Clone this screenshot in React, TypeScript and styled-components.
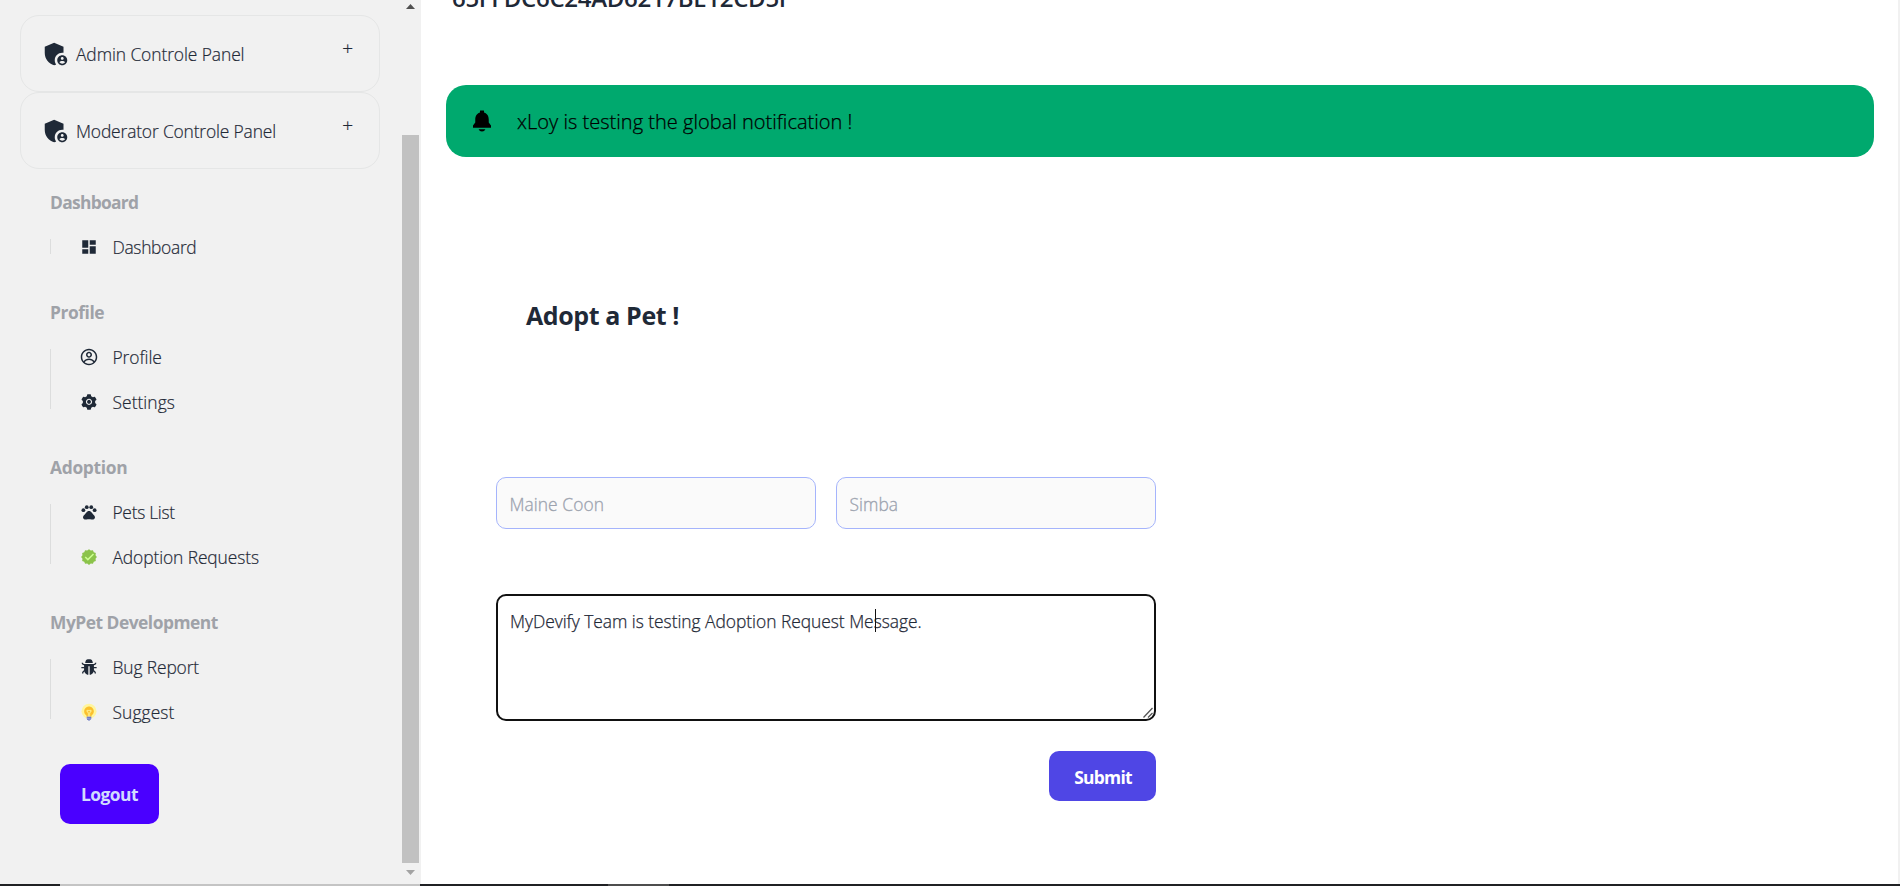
import React from "react";
import styled, { createGlobalStyle } from "styled-components";
import { MdAdminPanelSettings, MdDashboard, MdPets } from "react-icons/md";
import { CgProfile } from "react-icons/cg";
import { AiFillSetting, AiFillBug } from "react-icons/ai";
import { FcApproval, FcIdea } from "react-icons/fc";
import { IoNotificationsSharp } from "react-icons/io5";

const Global = createGlobalStyle`
  * { box-sizing: border-box; }
  body {
    margin: 0;
    background: #fff;
    color: #1f2937;
    font-family: "Open Sans", "Noto Sans", sans-serif;
    overflow: hidden;
  }
`;

const Page = styled.div`
  display: flex;
  flex-direction: column;
  height: 886px;
  overflow: hidden;
`;

const Columns = styled.div`
  display: flex;
  height: 884px;
`;

const Sidebar = styled.aside`
  display: flex;
  width: 421px;
  padding-right: 2px;
  background: #f1f1f1;
`;

const SidebarContent = styled.div`
  width: 402px;
  padding: 15px 22px 0 20px;
`;

const ScrollTrack = styled.div`
  width: 17px;
  height: 884px;
  display: flex;
  flex-direction: column;
  align-items: center;
`;

const Arrow = styled.div<{ $down?: boolean }>`
  width: 9px;
  height: 5px;
  margin-top: ${(p) => (p.$down ? "7px" : "4px")};
  background: ${(p) => (p.$down ? "#a3a3a3" : "#505050")};
  clip-path: ${(p) =>
    p.$down ? "polygon(0 0, 100% 0, 50% 100%)" : "polygon(0 100%, 100% 100%, 50% 0)"};
`;

const Thumb = styled.div`
  width: 17px;
  height: 728px;
  margin-top: 126px;
  background: #c1c1c1;
`;

const Panel = styled.div`
  display: flex;
  width: 360px;
  height: 77px;
  padding: 0 26px 0 20px;
  align-items: center;
  border: 1px solid #e5e6e6;
  border-radius: 19px;
  font-size: 17.4px;
  font-weight: 300;
`;

const PanelLabel = styled.span<{ $spacing: string }>`
  flex: 1;
  margin-left: 5px;
  letter-spacing: ${(p) => p.$spacing};
  -webkit-text-stroke: 0.2px;
`;

const Plus = styled.span`
  align-self: flex-start;
  margin-top: 20px;
  font-size: 19px;
  line-height: 24px;
  -webkit-text-stroke: 0.2px;
`;

const Groups = styled.nav`
  display: flex;
  flex-direction: column;
  gap: 48px;
  padding: 23px 0 0 30px;
`;

const GroupTitle = styled.div<{ $spacing: string }>`
  height: 24px;
  font-size: 17.4px;
  font-weight: 700;
  line-height: 21px;
  color: #9fa2a8;
  letter-spacing: ${(p) => p.$spacing};
`;

const GroupItems = styled.div`
  display: flex;
  flex-direction: column;
  gap: 30px;
  margin-top: 23px;
  padding-left: 28.5px;
  border-left: 1px solid #dcdddd;
`;

const Item = styled.div<{ $spacing: string }>`
  display: flex;
  align-items: center;
  height: 15px;
  font-size: 17.4px;
  font-weight: 300;
  white-space: nowrap;
  letter-spacing: ${(p) => p.$spacing};
  svg { margin-right: 15px; flex: none; }
  span { -webkit-text-stroke: 0.2px; }
`;

const Logout = styled.button`
  display: block;
  width: 99px;
  height: 60px;
  margin: 45px 0 0 40px;
  padding: 0;
  border: 0;
  border-radius: 10px;
  background: #4a00ff;
  color: #d1dbff;
  font: 700 17.4px "Open Sans", sans-serif;
  letter-spacing: -0.5px;
`;

const Main = styled.main`
  flex: 1;
  display: flex;
  flex-direction: column;
  padding: 0 24px 0 25px;
  border-right: 2px solid #f1f1f1;
`;

const Code = styled.div`
  height: 12px;
  margin-left: 6px;
  display: flex;
  align-items: flex-end;
  overflow: hidden;
  font-size: 24px;
  font-weight: 600;
  line-height: 28px;
  letter-spacing: -0.3px;
`;

const Notice = styled.div`
  display: flex;
  align-items: center;
  height: 72px;
  margin-top: 73px;
  padding-left: 24px;
  border-radius: 20px;
  background: #00a96e;
  color: #000;
  font-size: 20px;
  font-weight: 300;
  span {
    margin-left: 23px;
    letter-spacing: 0.02px;
    -webkit-text-stroke: 0.25px;
  }
`;

const Title = styled.h1`
  margin: 139px 0 0 80px;
  font-size: 25px;
  line-height: 38px;
  font-weight: 700;
  letter-spacing: -0.4px;
`;

const Form = styled.form`
  display: flex;
  flex-direction: column;
  width: 660px;
  margin: 143px 0 0 50px;
`;

const Fields = styled.div`
  display: flex;
  gap: 20px;
`;

const Field = styled.input`
  flex: 1;
  min-width: 0;
  height: 52px;
  padding: 2px 12.5px 0;
  border: 1px solid #a5b4fc;
  border-radius: 10px;
  background: #fafafa;
  font: 300 17.4px "Open Sans", sans-serif;
  letter-spacing: 0.05px;
  &::placeholder {
    color: #9ca3af;
    opacity: 1;
    -webkit-text-stroke: 0.3px;
  }
`;

const MessageBox = styled.div`
  display: flex;
  position: relative;
  margin-top: 65px;
`;

const Message = styled.textarea`
  width: 660px;
  height: 127px;
  padding: 13px 12px;
  border: 2px solid #111;
  border-radius: 10px;
  outline: none;
  resize: none;
  color: #1f2937;
  font: 300 17.4px/24px "Open Sans", sans-serif;
  letter-spacing: -0.03px;
  -webkit-text-stroke: 0.25px;
`;

const Grip = styled.svg`
  position: absolute;
  right: 2px;
  bottom: 2px;
  width: 12px;
  height: 12px;
`;

const Caret = styled.i`
  position: absolute;
  left: 379px;
  top: 15px;
  width: 1px;
  height: 23px;
  background: #111;
`;

const Submit = styled.button`
  align-self: flex-end;
  width: 107px;
  height: 50px;
  margin-top: 30px;
  padding: 2px 0 0 1px;
  border: 0;
  border-radius: 10px;
  background: #4f46e5;
  color: #fff;
  font: 700 17.4px "Open Sans", sans-serif;
  letter-spacing: -0.7px;
`;

const BottomEdge = styled.div`
  display: flex;
  height: 2px;
  background: #202124;
`;

const EdgePart = styled.div<{ $gap: number; $width: number; $color: string }>`
  width: ${(p) => p.$width}px;
  margin-left: ${(p) => p.$gap}px;
  background: ${(p) => p.$color};
`;

const panels = [
  { label: "Admin Controle Panel", spacing: "-0.08px" },
  { label: "Moderator Controle Panel", spacing: "-0.15px" },
];

const groups = [
  { title: "Dashboard", spacing: "-0.7px", items: [{ label: "Dashboard", icon: MdDashboard, spacing: "-0.32px" }] },
  {
    title: "Profile",
    spacing: "-0.45px",
    items: [
      { label: "Profile", icon: CgProfile, spacing: "-0.08px" },
      { label: "Settings", icon: AiFillSetting, spacing: "0.05px" },
    ],
  },
  {
    title: "Adoption",
    spacing: "-0.3px",
    items: [
      { label: "Pets List", icon: MdPets, spacing: "-0.3px" },
      { label: "Adoption Requests", icon: FcApproval, spacing: "-0.1px" },
    ],
  },
  {
    title: "MyPet Development",
    spacing: "-0.5px",
    items: [
      { label: "Bug Report", icon: AiFillBug, spacing: "-0.12px" },
      { label: "Suggest", icon: FcIdea, spacing: "0.08px" },
    ],
  },
];

export default function App() {
  return (
    <Page>
      <Global />
      <Columns>
        <Sidebar>
          <SidebarContent>
            {panels.map((p) => (
              <Panel key={p.label}>
                <MdAdminPanelSettings size={30} />
                <PanelLabel $spacing={p.spacing}>{p.label}</PanelLabel>
                <Plus>+</Plus>
              </Panel>
            ))}
            <Groups>
              {groups.map((g) => (
                <div key={g.title}>
                  <GroupTitle $spacing={g.spacing}>{g.title}</GroupTitle>
                  <GroupItems>
                    {g.items.map(({ label, icon: Icon, spacing }) => (
                      <Item key={label} $spacing={spacing}>
                        <Icon size={18} />
                        <span>{label}</span>
                      </Item>
                    ))}
                  </GroupItems>
                </div>
              ))}
            </Groups>
            <Logout>Logout</Logout>
          </SidebarContent>
          <ScrollTrack>
            <Arrow />
            <Thumb />
            <Arrow $down />
          </ScrollTrack>
        </Sidebar>
        <Main>
          <Code>65FFDC6C24AD6217BE12CD5F</Code>
          <Notice>
            <IoNotificationsSharp size={24} />
            <span>xLoy is testing the global notification !</span>
          </Notice>
          <Title>Adopt a Pet !</Title>
          <Form>
            <Fields>
              <Field placeholder="Maine Coon" />
              <Field placeholder="Simba" />
            </Fields>
            <MessageBox>
              <Message defaultValue="MyDevify Team is testing Adoption Request Message." spellCheck={false} />
              <Caret />
              <Grip viewBox="0 0 12 12" fill="none" stroke="#555" strokeWidth="1.3">
                <path d="M1.5 10.5 L10.5 1 M6 10.5 L10.5 6" />
              </Grip>
            </MessageBox>
            <Submit type="button">Submit</Submit>
          </Form>
        </Main>
      </Columns>
      <BottomEdge>
        <EdgePart $gap={60} $width={360} $color="#c4c4c4" />
        <EdgePart $gap={188} $width={61} $color="#4d4d4d" />
      </BottomEdge>
    </Page>
  );
}
